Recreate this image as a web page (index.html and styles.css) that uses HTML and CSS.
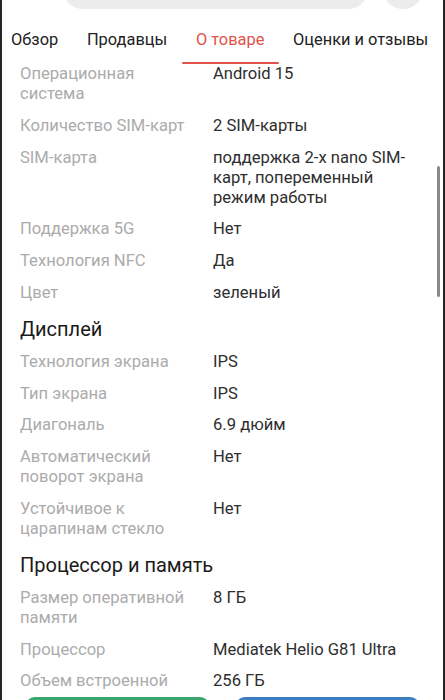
FILE: index.html
```html
<!DOCTYPE html>
<html lang="ru">
<head>
    <meta charset="UTF-8">
    <meta name="viewport" content="width=device-width, initial-scale=1.0">
    <title>О товаре</title>
    <link rel="stylesheet" href="styles.css">
</head>
<body>
    <div class="screen">
        <div class="topbar">
            <div class="search"></div>
            <div class="round-btn"></div>
        </div>

        <div class="tabs">
            <div class="tab">Обзор</div>
            <div class="tab">Продавцы</div>
            <div class="tab active">О товаре</div>
            <div class="tab">Оценки и отзывы</div>
        </div>

        <div class="specs">
            <div class="row"><div class="label">Операционная система</div><div class="value">Android 15</div></div>
            <div class="row"><div class="label">Количество SIM-карт</div><div class="value">2 SIM-карты</div></div>
            <div class="row"><div class="label">SIM-карта</div><div class="value">поддержка 2-х nano SIM-карт, попеременный режим работы</div></div>
            <div class="row"><div class="label">Поддержка 5G</div><div class="value">Нет</div></div>
            <div class="row"><div class="label">Технология NFC</div><div class="value">Да</div></div>
            <div class="row"><div class="label">Цвет</div><div class="value">зеленый</div></div>

            <h2 class="group">Дисплей</h2>
            <div class="row"><div class="label">Технология экрана</div><div class="value">IPS</div></div>
            <div class="row"><div class="label">Тип экрана</div><div class="value">IPS</div></div>
            <div class="row"><div class="label">Диагональ</div><div class="value">6.9 дюйм</div></div>
            <div class="row"><div class="label">Автоматический поворот экрана</div><div class="value">Нет</div></div>
            <div class="row"><div class="label">Устойчивое к царапинам стекло</div><div class="value">Нет</div></div>

            <h2 class="group">Процессор и память</h2>
            <div class="row"><div class="label">Размер оперативной памяти</div><div class="value">8 ГБ</div></div>
            <div class="row"><div class="label">Процессор</div><div class="value">Mediatek Helio G81 Ultra</div></div>
            <div class="row"><div class="label">Объем встроенной памяти</div><div class="value">256 ГБ</div></div>
        </div>

        <div class="scrollbar"></div>

        <!-- bottom action bar stays on top of the list -->
        <div class="actions">
            <div class="btn btn-green"></div>
            <div class="btn btn-blue"></div>
        </div>
    </div>
</body>
</html>
```

FILE: styles.css
```css
html, body { margin: 0; padding: 0; height: 100%; overflow: hidden; }
body { font-family: Roboto, "Noto Sans", sans-serif; background: #fff; }

.screen { position: relative; height: 700px; overflow: hidden; border-left: 2px solid #262626; border-right: 2px solid #262626; background: #fff; }

/* search bar, only its lower edge is on screen */
.topbar { height: 9px; overflow: hidden; display: flex; align-items: flex-end; gap: 15px; padding-left: 61px; }
.search { width: 305px; height: 40px; border-radius: 20px; background: #ececec; flex: none; }
.round-btn { width: 40px; height: 40px; border-radius: 20px; background: #ececec; flex: none; }

.tabs { display: flex; height: 55px; padding: 0 0 0 9px; }
.tab { position: relative; font-size: 16.4px; color: #222; padding: 21px 0 0; margin-right: 28.7px; white-space: nowrap; }
.tab:last-child { margin-right: 0; }
.tab.active { color: #e0524a; }
.tab.active::after { content: ""; position: absolute; left: -14px; right: -15px; top: 53px; height: 2px; background: #e0524a; border-radius: 1px; }

.specs { padding: 0 18px 0 18px; }
.row { display: flex; font-size: 16.6px; line-height: 20px; padding-bottom: 11.8px; }
.label { width: 193px; flex: none; color: #ababab; padding-right: 16px; box-sizing: border-box; }
.value { flex: 1; color: #2e2e2e; padding-right: 10px; }

.group { margin: 0; font-size: 20px; font-weight: normal; color: #1a1a1a; line-height: 24px; padding: 2px 0 11px; }

.scrollbar { position: absolute; right: 3px; top: 166px; width: 3px; height: 131px; background: #8a8a8a; border-radius: 2px; }

.actions { position: absolute; left: 0; right: 0; top: 691px; height: 20px; padding: 6px 23px 0; background: #fff; display: flex; gap: 25px; }
.btn { flex: 1; height: 40px; border-radius: 10px; }
.btn-green { background: #3aa56c; }
.btn-blue { background: #3b7fc0; }
```
